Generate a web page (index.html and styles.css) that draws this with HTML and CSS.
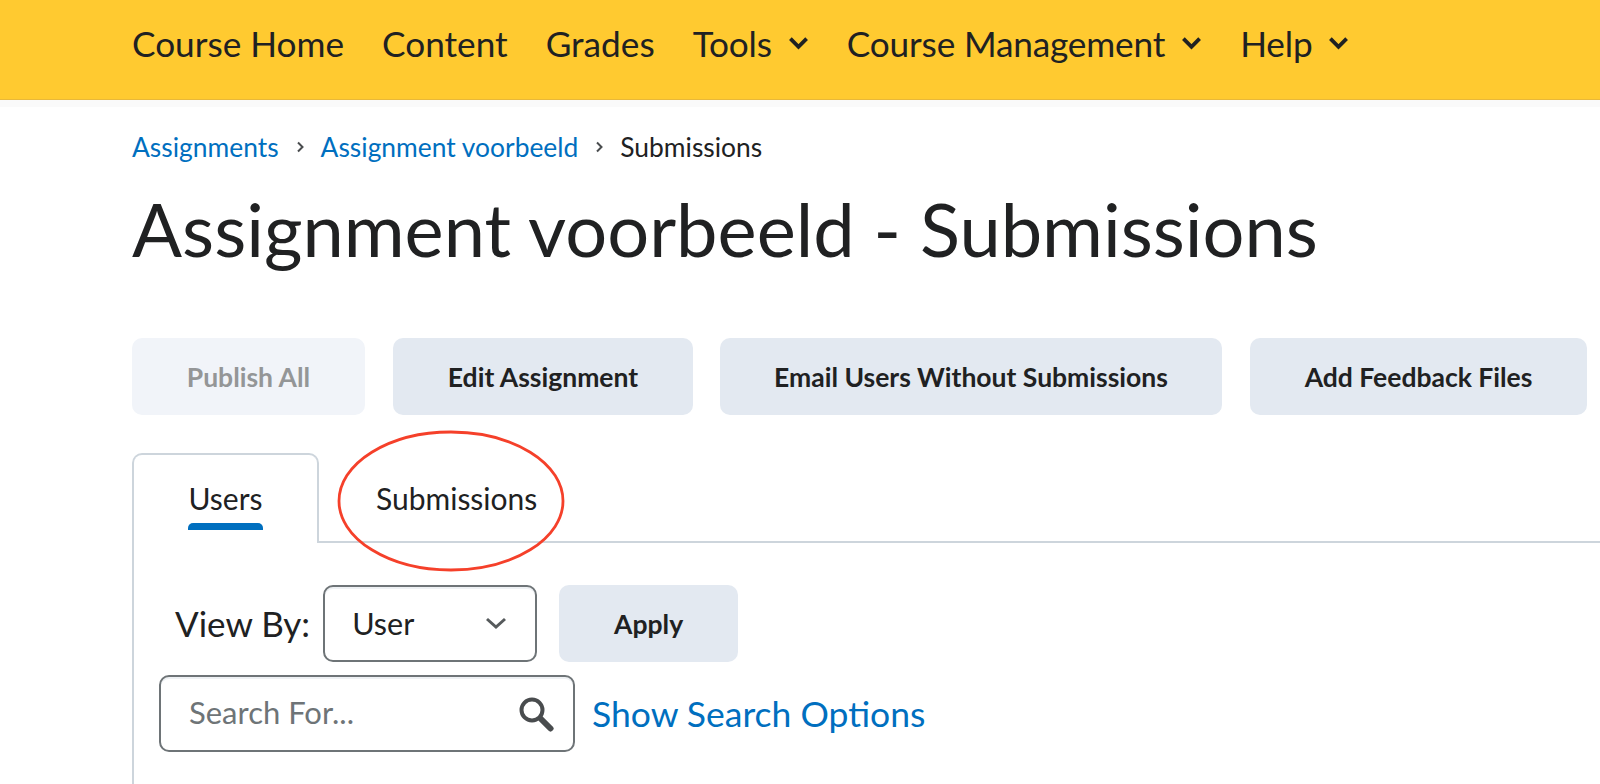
FILE: index.html
```html
<!DOCTYPE html>
<html lang="en">
<head>
<meta charset="utf-8">
<title>Assignment voorbeeld - Submissions</title>
<link rel="stylesheet" href="styles.css">
</head>
<body>
<nav class="nav">
  <a class="nav-item">Course Home</a>
  <a class="nav-item">Content</a>
  <a class="nav-item">Grades</a>
  <a class="nav-item nav-menu">Tools <svg class="nav-chev" viewBox="0 0 22 14"><path d="M2.5 2.5l8.5 8.5 8.5-8.5"/></svg></a>
  <a class="nav-item nav-menu">Course Management <svg class="nav-chev" viewBox="0 0 22 14"><path d="M2.5 2.5l8.5 8.5 8.5-8.5"/></svg></a>
  <a class="nav-item nav-menu">Help <svg class="nav-chev" viewBox="0 0 22 14"><path d="M2.5 2.5l8.5 8.5 8.5-8.5"/></svg></a>
</nav>
<div class="nav-shadow"></div>
<main class="page">
  <div class="crumbs">
    <a class="link">Assignments</a>
    <svg class="crumb-sep" viewBox="0 0 8 14"><path d="M2 2.5l4.5 4.5-4.5 4.5"/></svg>
    <a class="link">Assignment voorbeeld</a>
    <svg class="crumb-sep" viewBox="0 0 8 14"><path d="M2 2.5l4.5 4.5-4.5 4.5"/></svg>
    <span>Submissions</span>
  </div>
  <h1 class="title">Assignment voorbeeld - Submissions</h1>
  <div class="actions">
    <button class="btn btn-disabled btn-publish">Publish All</button>
    <button class="btn btn-edit">Edit Assignment</button>
    <button class="btn btn-email">Email Users Without Submissions</button>
    <button class="btn btn-feedback">Add Feedback Files</button>
  </div>
  <div class="tabs">
    <div class="tab tab-active"><span class="tab-label">Users</span><span class="tab-bar"></span></div>
    <div class="tab tab-plain"><span class="tab-label">Submissions</span></div>
    <svg class="circle" viewBox="0 0 228 142"><ellipse cx="114" cy="71" rx="112" ry="69"/></svg>
  </div>
  <section class="panel">
    <div class="row-view">
      <label class="view-label">View By:</label>
      <div class="select"><span>User</span><svg class="select-chev" viewBox="0 0 22 12"><path d="M2 2l9 8 9-8"/></svg></div>
      <button class="btn btn-apply">Apply</button>
    </div>
    <div class="row-search">
      <div class="search"><span class="placeholder">Search For...</span>
        <svg class="search-icon" viewBox="0 0 36 36"><circle cx="14" cy="14" r="10.5"/><path class="handle" d="M23 23l9.5 9.5"/></svg>
      </div>
      <a class="link show-options">Show Search Options</a>
    </div>
  </section>
</main>
</body>
</html>
```
FILE: styles.css
```css
* { box-sizing: border-box; }
html, body { margin: 0; height: 784px; overflow: hidden; background: #fff; }
body { font-family: Lato, "Open Sans", sans-serif; color: #202122; }

.nav { height: 100px; background: #ffca30; border-bottom: 1px solid #e8b83a; padding: 0 0 13px 132px; display: flex; align-items: center; gap: 38px; font-size: 35.2px; }
.nav-item { display: flex; align-items: center; gap: 16px; white-space: nowrap; }
.nav-menu { letter-spacing: -0.16px; }
.nav-chev { width: 21px; height: 14px; fill: none; stroke: #202122; stroke-width: 4; }
.nav-shadow { height: 7px; background: #fafafa; }

.page { padding-left: 132px; }
.crumbs { margin-top: 23px; height: 34px; display: flex; align-items: center; gap: 17px; font-size: 26.4px; white-space: nowrap; }
.crumb-sep { width: 8px; height: 14px; fill: none; stroke: #494c4e; stroke-width: 2; }
.link { color: #006fbf; }

.title { margin: 15px 0 0; font-size: 74px; font-weight: 400; line-height: 100px; white-space: nowrap; }

.actions { margin-top: 59px; display: flex; gap: 28px; height: 77px; }
.btn { height: 77px; border: 0; border-radius: 10px; background: #e3e9f1; color: #202122; font: 700 26.5px Lato, sans-serif; padding: 0; white-space: nowrap; }
.btn-disabled { background: #f1f4f9; color: #949697; }
.btn-publish { width: 233px; }
.btn-edit { width: 300px; }
.btn-email { width: 502px; margin-left: -1px; }
.btn-feedback { width: 337px; }
.btn-apply { width: 179px; margin-left: 22px; }

.tabs { position: relative; margin-top: 38px; height: 90px; display: flex; border-bottom: 2px solid #cdd5dc; }
.tab { height: 90px; display: flex; flex-direction: column; align-items: center; font-size: 30px; }
.tab-active { width: 187px; margin-right: 1px; background: #fff; border: 2px solid #cdd5dc; border-bottom: 0; border-radius: 10px 10px 0 0; padding-top: 26px; }
.tab-plain { padding: 28px 0 0 56px; }
.tab-label { line-height: 34px; }
.tab-bar { width: 75px; height: 7px; margin-top: 8px; background: #006fbf; border-radius: 5px 5px 0 0; }
.circle { position: absolute; left: 205px; top: -23px; width: 228px; height: 142px; fill: none; stroke: #f5402a; stroke-width: 2.8; }

.panel { height: 241px; border-left: 2px solid #cdd5dc; }
.row-view { display: flex; align-items: center; padding: 42px 0 0 41px; }
.view-label { font-size: 35px; margin-right: 13px; line-height: 77px; }
.select { width: 214px; height: 77px; border: 2px solid #6e7477; border-radius: 10px; display: flex; align-items: center; justify-content: space-between; padding: 0 28px 2px 27px; font-size: 30.5px; box-shadow: inset 0 2px 0 #eef1f4; }
.select-chev { width: 22px; height: 12px; fill: none; stroke: #565a5c; stroke-width: 3; }
.row-search { display: flex; align-items: center; margin-top: 13px; padding-left: 25px; }
.search { width: 416px; height: 77px; border: 2px solid #6e7477; border-radius: 10px; display: flex; align-items: center; justify-content: space-between; padding: 0 19px 0 28px; font-size: 31px; box-shadow: inset 0 2px 0 #eef1f4; }
.placeholder { color: #6e7477; margin-bottom: 4px; }
.search-icon { width: 36px; height: 36px; fill: none; stroke: #494c4e; stroke-width: 4; }
.handle { stroke-width: 6; stroke-linecap: round; }
.show-options { margin-left: 17px; font-size: 35.5px; white-space: nowrap; }
```
